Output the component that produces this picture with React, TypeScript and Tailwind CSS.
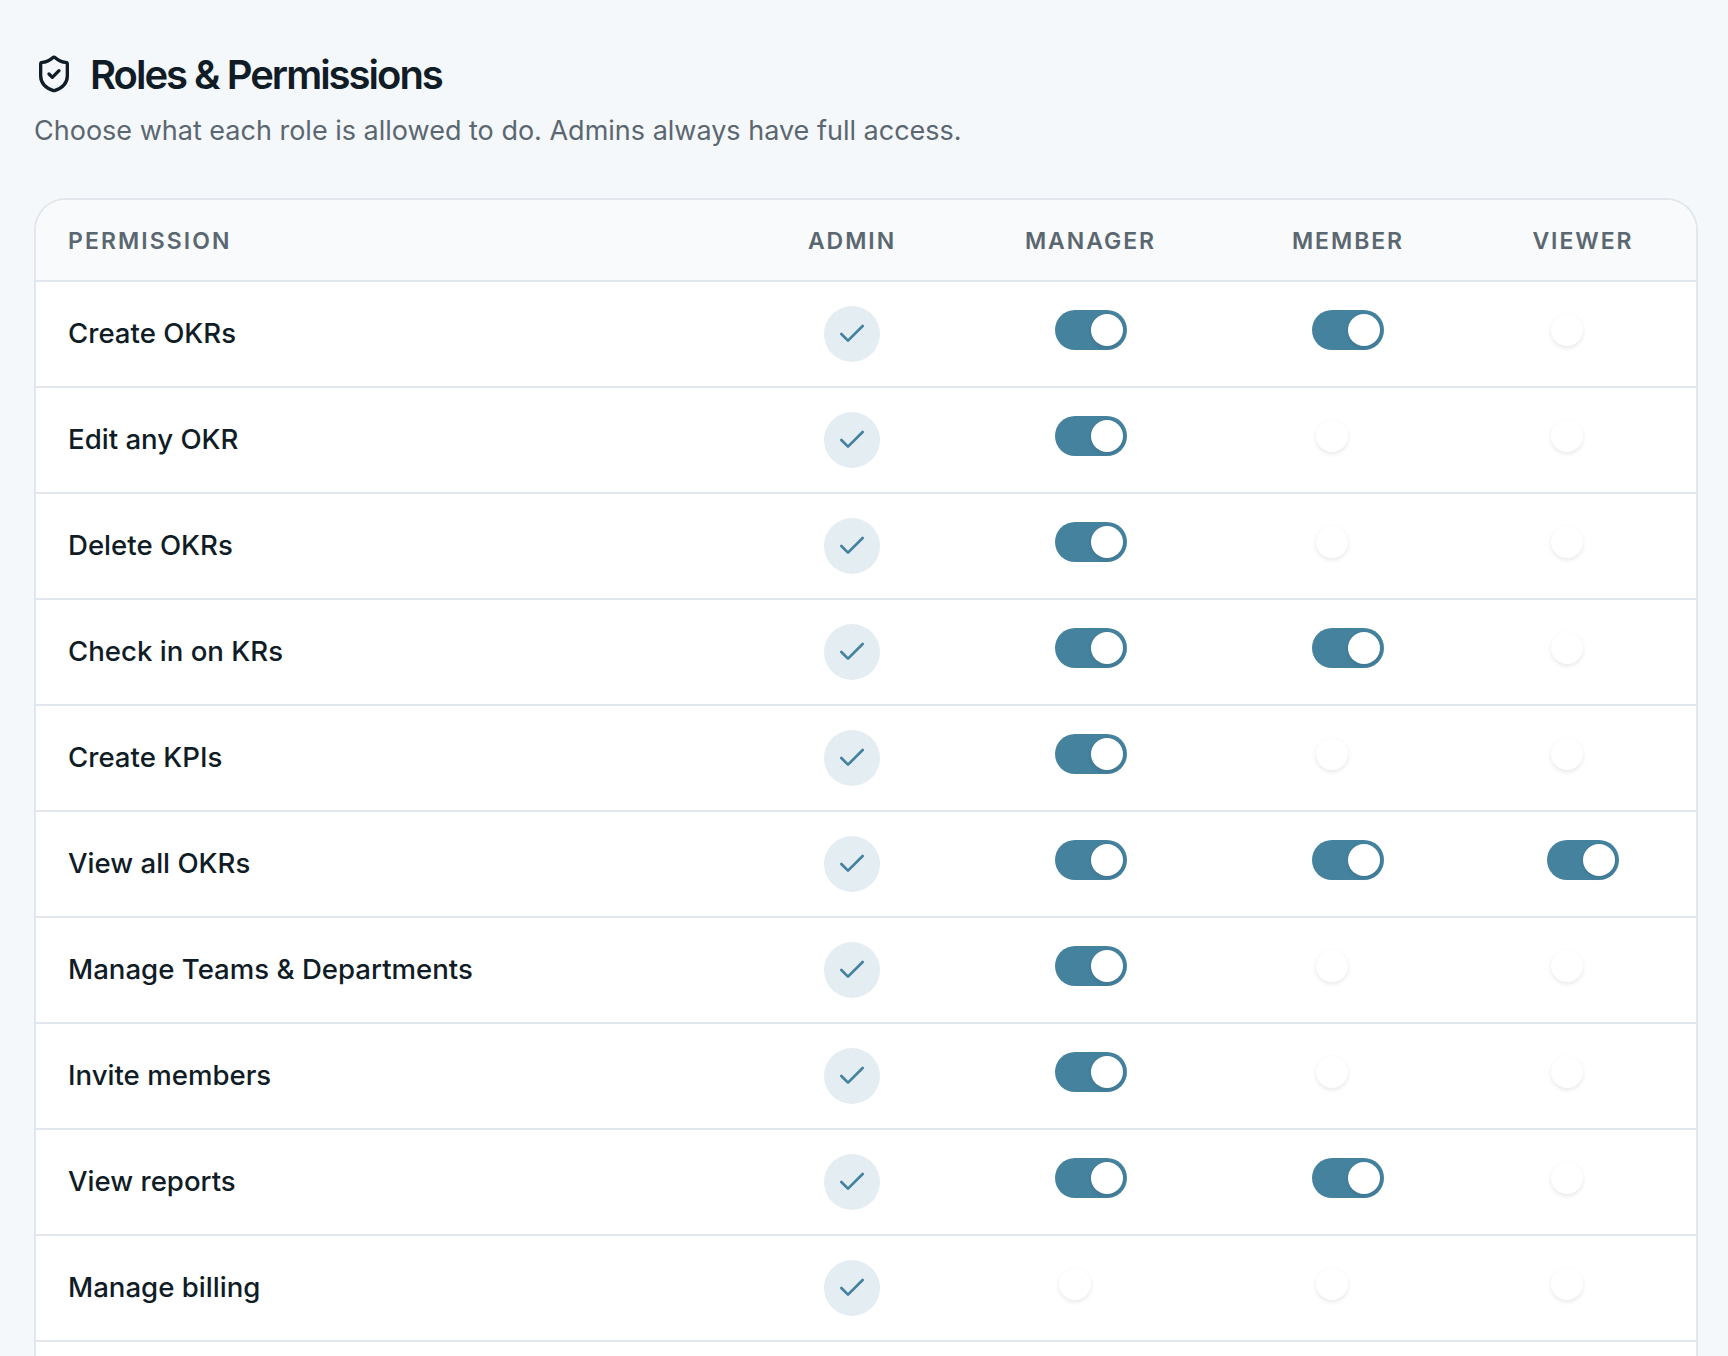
import { Check, ShieldCheck } from "lucide-react"

// true / false per role: manager, member, viewer (admin is always on)
const rows: [string, boolean, boolean, boolean][] = [
  ["Create OKRs", true, true, false],
  ["Edit any OKR", true, false, false],
  ["Delete OKRs", true, false, false],
  ["Check in on KRs", true, true, false],
  ["Create KPIs", true, false, false],
  ["View all OKRs", true, true, true],
  ["Manage Teams & Departments", true, false, false],
  ["Invite members", true, false, false],
  ["View reports", true, true, false],
  ["Manage billing", false, false, false],
]

const gridCols = "grid grid-cols-[713px_206px_271px_244px_226px]"

function Toggle({ on }: { on: boolean }) {
  return (
    <span
      className={`mb-2 flex h-10 w-[72px] items-center rounded-full p-1 ${
        on ? "justify-end bg-[#44829e]" : "justify-start bg-transparent"
      }`}
    >
      <span className="h-8 w-8 rounded-full bg-white shadow-[0_2px_4px_rgba(16,28,38,0.1)]" />
    </span>
  )
}

function HeaderCell({ label }: { label: string }) {
  return <div className="text-center text-[23px] font-semibold tracking-[0.085em] text-[#5b6770]">{label}</div>
}

export default function App() {
  return (
    <div className="flex h-[1356px] flex-col overflow-hidden bg-[#f5f8fa] pl-[34px] pr-[30px] pt-[55px] font-['Inter',sans-serif]">
      <div className="flex items-center gap-4">
        <ShieldCheck size={40} className="-mt-[2px] text-[#101c26]" />
        <h1 className="text-[40px] leading-10 font-semibold tracking-[-2px] text-[#101c26]">Roles &amp; Permissions</h1>
      </div>
      <p className="mt-4 text-[27px] leading-10 text-[#5b6770]">
        Choose what each role is allowed to do. Admins always have full access.
      </p>

      <div className="mt-[47px] flex-1 rounded-t-[32px] border-2 border-b-0 border-[#e1e7ec] bg-white">
        <div className={`${gridCols} h-[82px] items-center rounded-t-[30px] border-b-2 border-[#e1e7ec] bg-[#f8fafb] pt-[2px]`}>
          <div className="pl-8 text-[23px] font-semibold tracking-[0.09em] text-[#5b6770]">PERMISSION</div>
          <HeaderCell label="ADMIN" />
          <HeaderCell label="MANAGER" />
          <HeaderCell label="MEMBER" />
          <HeaderCell label="VIEWER" />
        </div>

        {rows.map(([name, manager, member, viewer]) => (
          <div key={name} className={`${gridCols} h-[106px] items-center border-b-2 border-[#e1e7ec]`}>
            <div className="pl-8 text-[27.6px] font-medium text-[#101c26]">{name}</div>
            <div className="flex justify-center">
              <span className="flex h-14 w-14 items-center justify-center rounded-full bg-[#e4edf2] text-[#44829e]">
                <Check size={32} />
              </span>
            </div>
            <div className="flex justify-center">
              <Toggle on={manager} />
            </div>
            <div className="flex justify-center">
              <Toggle on={member} />
            </div>
            <div className="flex justify-center">
              <Toggle on={viewer} />
            </div>
          </div>
        ))}
      </div>
    </div>
  )
}
